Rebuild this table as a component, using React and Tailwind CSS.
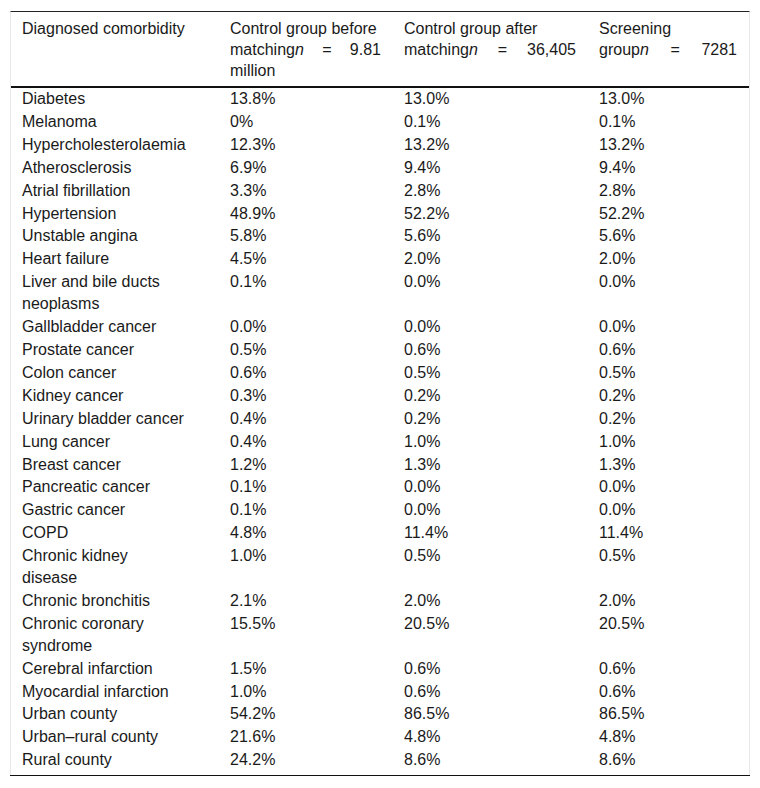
import React from 'react';

const rows = [
  ['Diabetes', '13.8%', '13.0%', '13.0%'],
  ['Melanoma', '0%', '0.1%', '0.1%'],
  ['Hypercholesterolaemia', '12.3%', '13.2%', '13.2%'],
  ['Atherosclerosis', '6.9%', '9.4%', '9.4%'],
  ['Atrial fibrillation', '3.3%', '2.8%', '2.8%'],
  ['Hypertension', '48.9%', '52.2%', '52.2%'],
  ['Unstable angina', '5.8%', '5.6%', '5.6%'],
  ['Heart failure', '4.5%', '2.0%', '2.0%'],
  ['Liver and bile ducts neoplasms', '0.1%', '0.0%', '0.0%'],
  ['Gallbladder cancer', '0.0%', '0.0%', '0.0%'],
  ['Prostate cancer', '0.5%', '0.6%', '0.6%'],
  ['Colon cancer', '0.6%', '0.5%', '0.5%'],
  ['Kidney cancer', '0.3%', '0.2%', '0.2%'],
  ['Urinary bladder cancer', '0.4%', '0.2%', '0.2%'],
  ['Lung cancer', '0.4%', '1.0%', '1.0%'],
  ['Breast cancer', '1.2%', '1.3%', '1.3%'],
  ['Pancreatic cancer', '0.1%', '0.0%', '0.0%'],
  ['Gastric cancer', '0.1%', '0.0%', '0.0%'],
  ['COPD', '4.8%', '11.4%', '11.4%'],
  ['Chronic kidney disease', '1.0%', '0.5%', '0.5%'],
  ['Chronic bronchitis', '2.1%', '2.0%', '2.0%'],
  ['Chronic coronary syndrome', '15.5%', '20.5%', '20.5%'],
  ['Cerebral infarction', '1.5%', '0.6%', '0.6%'],
  ['Myocardial infarction', '1.0%', '0.6%', '0.6%'],
  ['Urban county', '54.2%', '86.5%', '86.5%'],
  ['Urban\u2013rural county', '21.6%', '4.8%', '4.8%'],
  ['Rural county', '24.2%', '8.6%', '8.6%'],
];

// justified "matchingn = value" line
const NLine = ({ pre, value }) => (
  <div className="flex justify-between">
    <span>
      {pre}
      <i>n</i>
    </span>
    <span>=</span>
    <span>{value}</span>
  </div>
);

export default function App() {
  return (
    <div className="min-h-[788px] bg-white pt-[11px] px-[10px] font-['Liberation_Sans',Arial,sans-serif] text-[16px] text-[#1a1a1a]">
      <div className="w-[740px] border-x border-t border-x-[#e8e8e8] border-t-[#222]">
        <table className="table-fixed border-collapse w-[738px]">
          <colgroup>
            <col className="w-[208px]" />
            <col className="w-[174px]" />
            <col className="w-[195px]" />
            <col className="w-[161px]" />
          </colgroup>
          <thead>
            <tr className="border-b-2 border-[#111] align-top text-left leading-[21px]">
              <th className="font-normal pl-[11px] pr-[12px] pt-[6px] pb-[5px]">Diagnosed comorbidity</th>
              <th className="font-normal pl-[11px] pr-[12px] pt-[6px] pb-[5px]">
                <div>Control group before</div>
                <NLine pre="matching" value="9.81" />
                <div>million</div>
              </th>
              <th className="font-normal pl-[11px] pr-[12px] pt-[6px] pb-[5px]">
                <div>Control group after</div>
                <NLine pre="matching" value="36,405" />
              </th>
              <th className="font-normal pl-[11px] pr-[12px] pt-[6px] pb-[5px]">
                <div>Screening</div>
                <NLine pre="group" value="7281" />
              </th>
            </tr>
          </thead>
          <tbody>
            {rows.map((r, i) => (
              <tr key={i} className="align-top leading-[21.9px]">
                {r.map((c, j) => (
                  <td
                    key={j}
                    className={`pl-[11px] ${j === 0 ? 'pr-[34px]' : 'pr-[12px]'} ${i === rows.length - 1 ? 'pb-[4px]' : 'pb-px'}`}
                  >
                    {c}
                  </td>
                ))}
              </tr>
            ))}
          </tbody>
        </table>
      </div>
      <div className="w-[740px] border-t border-[#111]" />
    </div>
  );
}
